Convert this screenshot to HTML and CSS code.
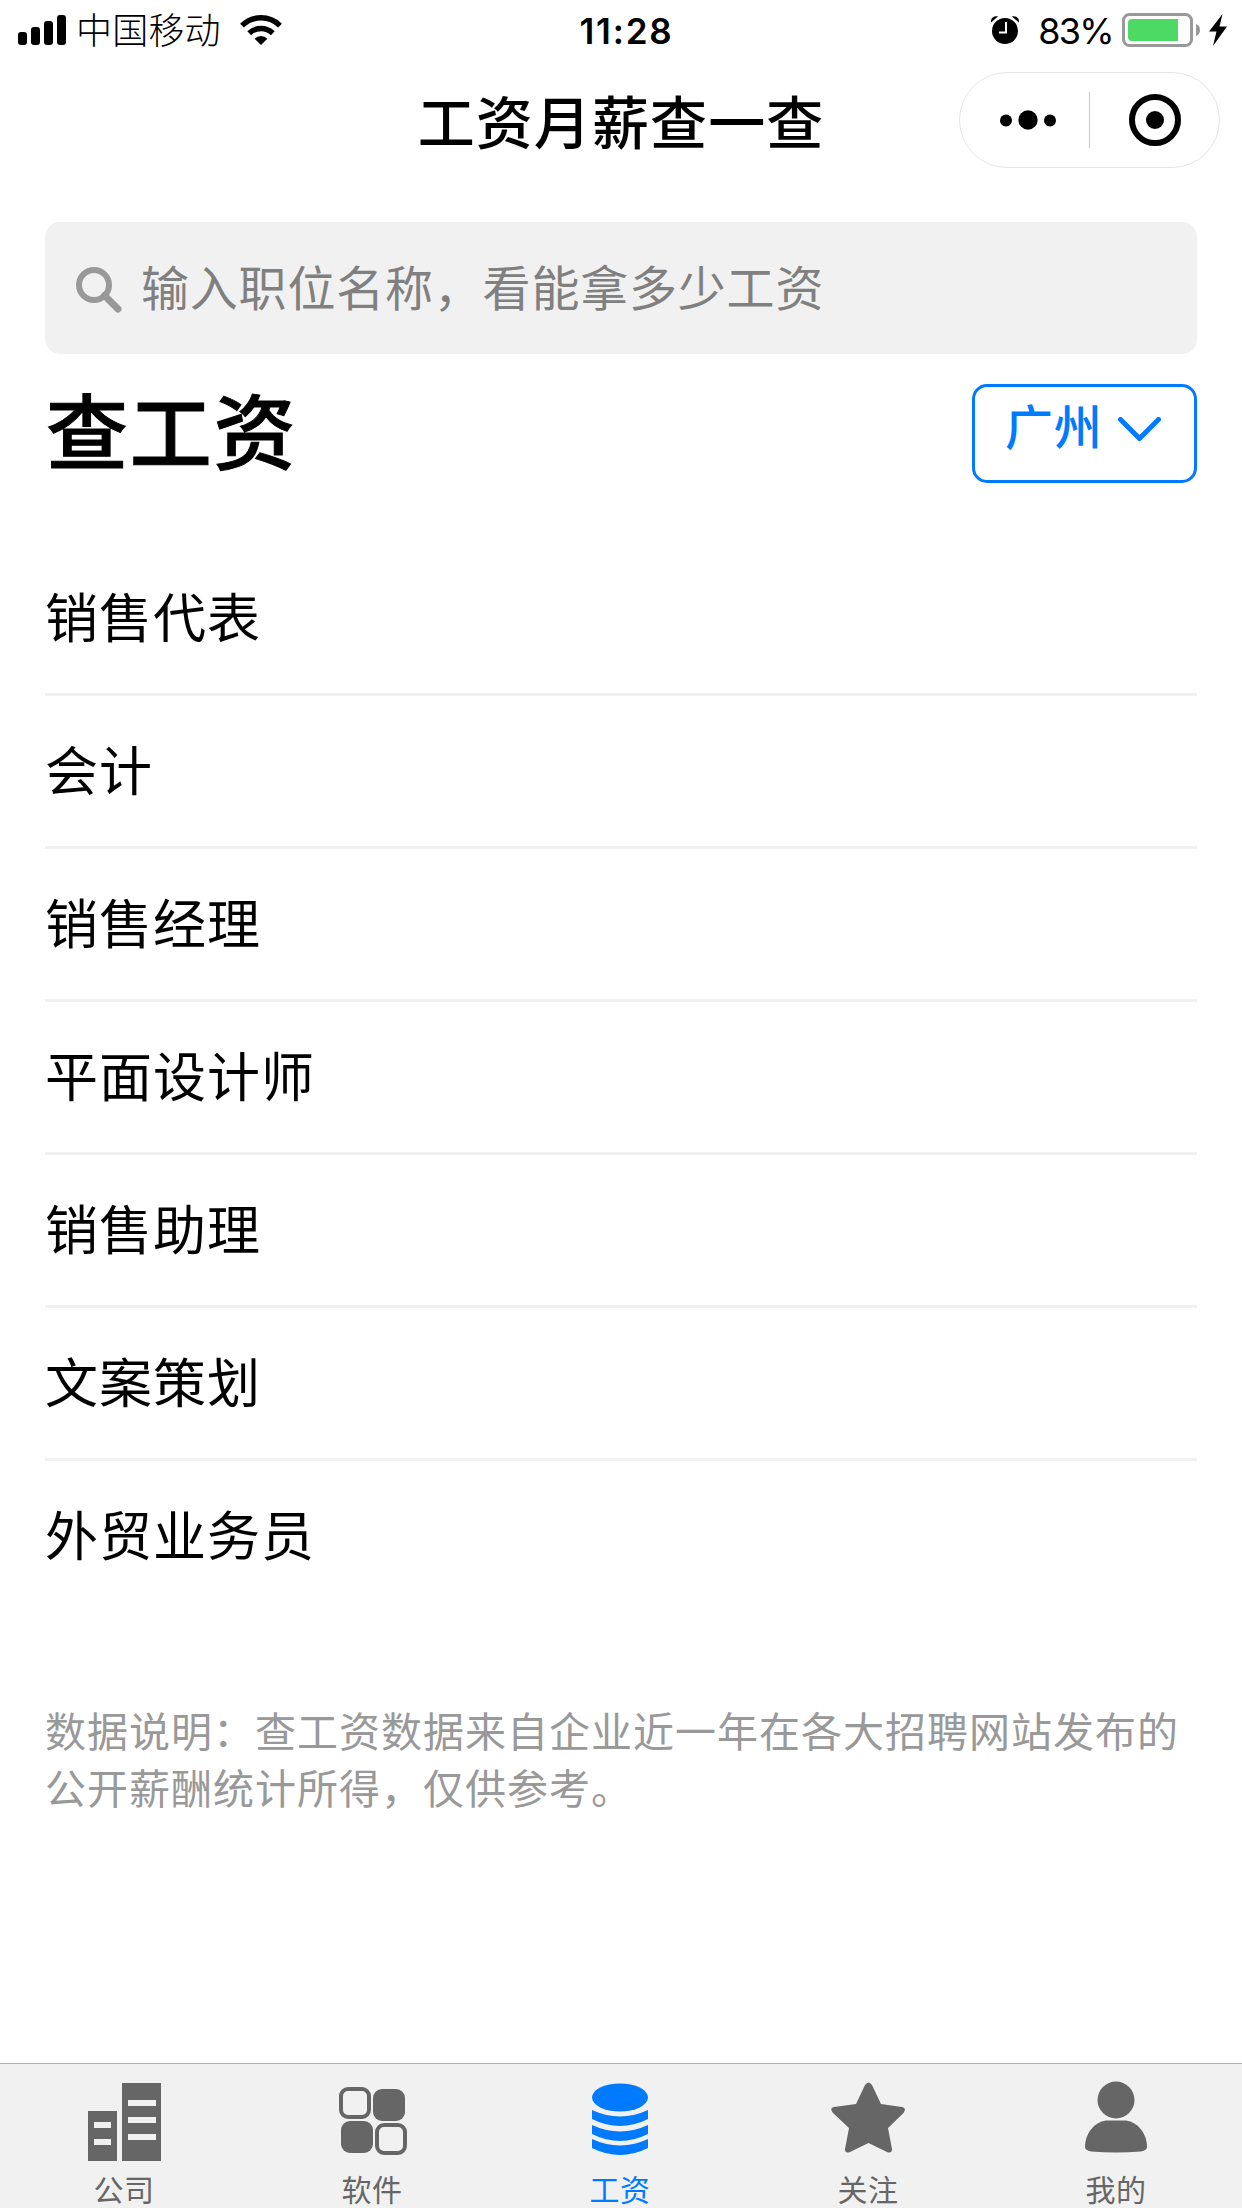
FILE: index.html
```html
<!DOCTYPE html>
<html lang="zh-CN">
<head>
  <meta charset="UTF-8" />
  <meta name="viewport" content="width=device-width, initial-scale=1.0" />
  <title>工资月薪查一查</title>
  <link rel="stylesheet" href="styles.css">
</head>
<body>
  <div class="status-bar">
    <div class="status-left">
      <svg class="signal" width="48" height="30" viewBox="0 0 48 30">
        <rect x="0" y="17" width="9" height="13" rx="3" />
        <rect x="13" y="12" width="9" height="18" rx="3" />
        <rect x="26" y="6" width="9" height="24" rx="3" />
        <rect x="39" y="0" width="9" height="30" rx="3" />
      </svg>
      <span class="carrier">中国移动</span>
      <svg class="wifi" width="42" height="30" viewBox="0 0 42 30">
        <path d="M2 10.6a27 27 0 0 1 38 0" fill="none" stroke="#000" stroke-width="5.4" />
        <path d="M9.2 18.3a17 17 0 0 1 23.6 0" fill="none" stroke="#000" stroke-width="5.4" />
        <path d="M14.6 23.7a9.2 9.2 0 0 1 12.8 0L21 30z" />
      </svg>
    </div>
    <div class="time">11:28</div>
    <div class="status-right">
      <svg class="alarm" width="28" height="28" viewBox="0 0 28 28">
        <circle cx="14" cy="15" r="13" />
        <path d="M0 6.5C-.5 2 3 -.5 7 .6z" />
        <path d="M28 6.5C28.5 2 25 -.5 21 .6z" />
        <path d="M15 6v10.5H8" fill="none" stroke="#fff" stroke-width="2" />
      </svg>
      <span class="percent">83%</span>
      <svg class="battery" width="78" height="34" viewBox="0 0 78 34">
        <rect x="1.5" y="1.5" width="68" height="31" rx="6" fill="#fff" stroke="#999" stroke-width="3" />
        <path d="M10 6h46v22H10q-4 0-4-4V10q0-4 4-4z" fill="#4cd964" />
        <path d="M74 11q4 1.5 4 6t-4 6z" fill="#999" />
      </svg>
      <svg class="bolt" width="18" height="32" viewBox="0 0 18 32">
        <path d="M13.5 0L0 17.5h7.5L4 32L18 12.5h-7.5z" />
      </svg>
    </div>
  </div>

  <header class="nav">
    <h1>工资月薪查一查</h1>
    <div class="capsule">
      <svg class="more" width="56" height="20" viewBox="0 0 56 20">
        <circle cx="6" cy="10.5" r="6" />
        <circle cx="28" cy="10" r="9.7" />
        <circle cx="50" cy="10.5" r="6" />
      </svg>
      <span class="capsule-line"></span>
      <svg class="close" width="52" height="52" viewBox="0 0 52 52">
        <circle cx="26" cy="26" r="23" fill="none" stroke="#000" stroke-width="6" />
        <circle cx="26" cy="26" r="9" />
      </svg>
    </div>
  </header>

  <main>
    <div class="search-box">
      <svg width="46" height="46" viewBox="0 0 46 46">
        <circle cx="18" cy="18" r="15" fill="none" stroke="#999" stroke-width="6" />
        <path d="M28.5 28.5L42 42" stroke="#999" stroke-width="7" stroke-linecap="round" />
      </svg>
      <span>输入职位名称，看能拿多少工资</span>
    </div>

    <div class="title-row">
      <h2>查工资</h2>
      <div class="city">
        <span>广州</span>
        <svg width="43" height="25" viewBox="0 0 43 25">
          <path d="M2.5 2.5L21.5 21.5L40.5 2.5" fill="none" stroke="#007aff" stroke-width="5" stroke-linecap="round" stroke-linejoin="round" />
        </svg>
      </div>
    </div>

    <ul class="job-list">
      <li>销售代表</li>
      <li>会计</li>
      <li>销售经理</li>
      <li>平面设计师</li>
      <li>销售助理</li>
      <li>文案策划</li>
      <li>外贸业务员</li>
    </ul>

    <p class="note">数据说明：查工资数据来自企业近一年在各大招聘网站发布的<br>公开薪酬统计所得，仅供参考。</p>
  </main>

  <nav class="tab-bar">
    <div class="tab">
      <svg width="81" height="81" viewBox="0 0 81 81">
        <path fill-rule="evenodd" d="M4 31h29v50H4zM10 42v6h17v-6zM10 59v6h17v-6zM38 3h39v78H38zM44 20v6h28v-6zM44 37v6h28v-6zM44 54v6h28v-6z" />
      </svg>
      <span>公司</span>
    </div>
    <div class="tab">
      <svg width="81" height="81" viewBox="0 0 81 81">
        <rect x="9" y="9" width="28" height="28" rx="7" fill="none" stroke="#666" stroke-width="4" />
        <rect x="41" y="9" width="32" height="32" rx="9" />
        <rect x="9" y="41" width="32" height="32" rx="9" />
        <rect x="45" y="45" width="28" height="28" rx="7" fill="none" stroke="#666" stroke-width="4" />
      </svg>
      <span>软件</span>
    </div>
    <div class="tab active">
      <svg width="81" height="81" viewBox="0 0 81 81">
        <ellipse cx="40" cy="17.5" rx="28" ry="14" />
        <path d="M12 30q28 13 56 0v9q-28 14-56 0z" />
        <path d="M12 45q28 13 56 0v9q-28 14-56 0z" />
        <path d="M12 59q28 13 56 0v9q-28 14-56 0z" />
      </svg>
      <span>工资</span>
    </div>
    <div class="tab">
      <svg width="81" height="81" viewBox="0 0 81 81">
        <path d="M37 5q3.5-5 7 0l9 19l21 3q5 1 1.5 6L60 48l4 21q0 5-5 3L40.500 63L22 72q-5 2-5-3l4-21L5 33q-4-5 1-6l22-3z" />
      </svg>
      <span>关注</span>
    </div>
    <div class="tab">
      <svg width="81" height="81" viewBox="0 0 81 81">
        <circle cx="40" cy="20" r="18.5" />
        <path d="M30 40.5h20C62 42 71 54 71 67q0 3-6 4.500q-25 2-50 0q-6-1.500-6-4.500C9 54 18 42 30 40.500z" />
      </svg>
      <span>我的</span>
    </div>
  </nav>
</body>
</html>
```

FILE: styles.css
```css
* {
  box-sizing: border-box;
}

body {
  margin: 0;
  height: 2208px;
  display: flex;
  flex-direction: column;
  overflow: hidden;
  background: #fff;
  color: #000;
  font-family: Inter, 'Noto Sans CJK SC', sans-serif;
}

svg {
  display: block;
  flex: none;
}

.status-bar {
  height: 60px;
  display: grid;
  grid-template-columns: 1fr auto 1fr;
  align-items: center;
  padding: 0 15px 0 18px;
}

.status-left,
.status-right {
  display: flex;
  align-items: center;
}

.status-right {
  justify-content: flex-end;
}

.carrier {
  margin-left: 10px;
  padding-top: 3px;
  font-size: 36px;
  line-height: 57px;
  letter-spacing: 0.2px;
  font-weight: 300;
}

.wifi {
  margin-left: 19px;
}

.time {
  padding: 2px 0 0 8px;
  font-size: 35px;
  font-weight: 600;
  letter-spacing: 1.8px;
}

.percent {
  margin: 2px 9px 0 19px;
  font-size: 36px;
  line-height: 50px;
  letter-spacing: -1.7px;
}

.bolt {
  margin-left: 9px;
}

.nav {
  height: 132px;
  display: grid;
  grid-template-columns: 1fr auto 1fr;
  align-items: center;
  padding: 0 22px;
}

.nav h1 {
  grid-column: 2;
  margin: 0 0 4px;
  font-size: 57px;
  line-height: 80px;
  font-weight: 500;
  letter-spacing: 1.1px;
}

.capsule {
  justify-self: end;
  width: 261px;
  height: 96px;
  margin-bottom: 12px;
  display: flex;
  align-items: center;
  border: 1px solid #e5e5e5;
  border-radius: 48px;
}

.more {
  margin-left: 40px;
}

.capsule-line {
  width: 1px;
  height: 56px;
  margin: 0 39px 0 33px;
  background: #c8c8c8;
}

main {
  flex: 1;
  padding: 30px 45px 0;
}

.search-box {
  height: 132px;
  display: flex;
  align-items: center;
  padding-left: 31px;
  border-radius: 15px;
  background: #f1f1f1;
  color: #808080;
  font-size: 48px;
  letter-spacing: 0.8px;
}

.search-box svg {
  margin: 4px 19px 0 0;
}

.search-box span {
  margin-bottom: 6px;
}

.title-row {
  height: 159px;
  margin-top: 30px;
  display: flex;
  justify-content: space-between;
}

.title-row h2 {
  margin: 3px 0 0 1px;
  font-size: 82px;
  line-height: 94px;
  font-weight: 500;
  letter-spacing: 1.8px;
  -webkit-text-stroke: 1px #000;
}

.city {
  width: 225px;
  height: 99px;
  display: flex;
  padding: 0 0 0 30px;
  border: 3px solid #007aff;
  border-radius: 15px;
  color: #007aff;
  font-size: 48px;
  line-height: 82px;
  font-weight: 500;
  letter-spacing: 0.7px;
}

.city svg {
  margin: 30px 0 0 16px;
}

.job-list {
  margin: 0;
  padding: 0;
  list-style: none;
}

.job-list li {
  height: 153px;
  border-bottom: 3px solid #f1f1f1;
  font-size: 53px;
  line-height: 152px;
  letter-spacing: 1px;
}

.job-list li:last-child {
  border-bottom: none;
}

.note {
  margin: 90px 0 0;
  color: #999;
  font-size: 41px;
  line-height: 57px;
  letter-spacing: 1px;
  white-space: nowrap;
}

.tab-bar {
  height: 145px;
  display: grid;
  grid-template-columns: repeat(5, 248px);
  border-top: 1px solid #b2b2b2;
  background: #f1f1f1;
}

.tab {
  display: flex;
  flex-direction: column;
  align-items: center;
  padding-top: 16px;
  color: #666;
  font-size: 30px;
  line-height: 40px;
  letter-spacing: 0.6px;
}

.tab svg {
  fill: #666;
}

.tab span {
  margin-top: 9px;
}

.tab.active {
  color: #007aff;
}

.tab.active svg {
  fill: #007aff;
}
```
